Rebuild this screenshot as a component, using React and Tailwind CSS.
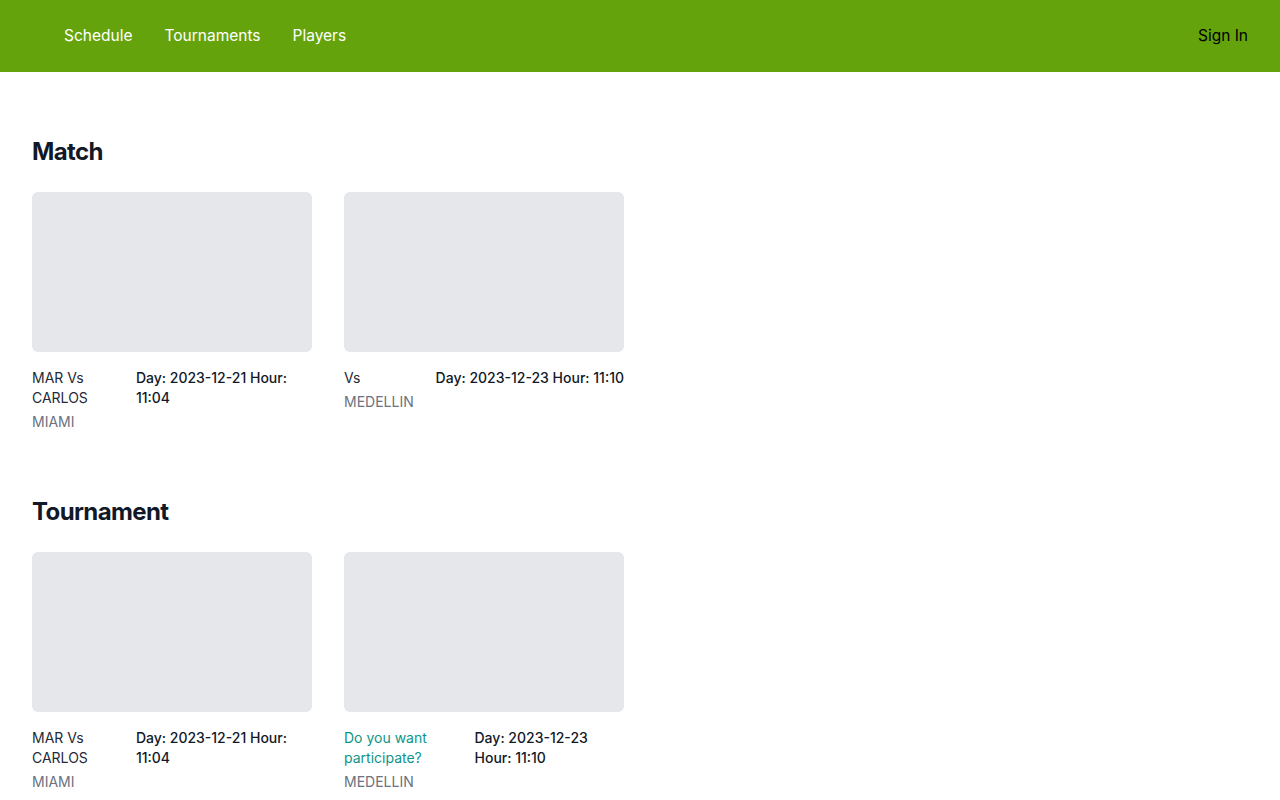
import React from "react";

const MATCHES = [
  { name: "MAR Vs CARLOS", place: "MIAMI", info: "Day: 2023-12-21 Hour: 11:04" },
  { name: "Vs", place: "MEDELLIN", info: "Day: 2023-12-23 Hour: 11:10" },
];

const TOURNAMENTS = [
  { name: "MAR Vs CARLOS", place: "MIAMI", info: "Day: 2023-12-21 Hour: 11:04" },
  {
    name: "Do you want participate?",
    place: "MEDELLIN",
    info: "Day: 2023-12-23 Hour: 11:10",
    link: true,
  },
];

const Card = ({ item }) => (
  <div>
    <div className="h-[160px] w-full rounded-md bg-[#e5e7eb]" />
    <div className="mt-4 flex justify-between">
      <div>
        <h3
          className={`text-sm ${item.link ? "text-[#0d9488]" : "text-[#1f2937]"}`}
        >
          {item.name}
        </h3>
        <p className="mt-1 text-sm text-[#6b7280]">{item.place}</p>
      </div>
      <p className="text-sm font-medium text-[#111827]">{item.info}</p>
    </div>
  </div>
);

const Section = ({ title, items }) => (
  <section className="pt-16">
    <h2 className="text-2xl font-bold tracking-tight text-[#111827]">{title}</h2>
    <div className="mt-6 grid grid-cols-4 gap-8">
      {items.map((item, idx) => (
        <Card key={idx} item={item} />
      ))}
    </div>
  </section>
);

const App = () => {
  return (
    <div className="min-h-screen bg-white font-['Inter',sans-serif]">
      <nav className="flex h-[72px] items-center justify-between bg-[#65a30d] pl-16 pr-8 pb-[1px]">
        <div className="flex gap-8 text-[15.5px] text-white">
          <a href="#">Schedule</a>
          <a href="#">Tournaments</a>
          <a href="#">Players</a>
        </div>
        <a href="#" className="text-[15.5px] text-black">
          Sign In
        </a>
      </nav>

      <main className="px-8">
        <Section title="Match" items={MATCHES} />
        <Section title="Tournament" items={TOURNAMENTS} />
      </main>
    </div>
  );
};

export default App;
